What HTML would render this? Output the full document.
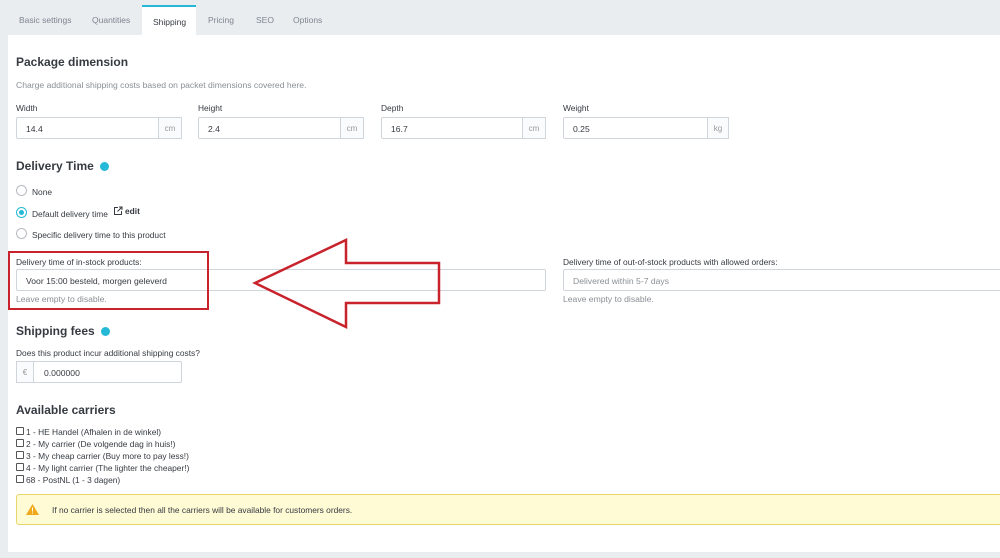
<!DOCTYPE html>
<html><head><style>
*{box-sizing:border-box;margin:0;padding:0}
body{width:1000px;height:558px;background:#eaedf0;font-family:"Liberation Sans",sans-serif;color:#363a41;position:relative;overflow:hidden;font-size:8.5px}
.a{position:absolute;white-space:nowrap}
.tab{position:absolute;top:15px;font-size:8.5px;color:#7d8590}
.panel{position:absolute;left:8px;top:35px;width:992px;height:517px;background:#fff}
h2{position:absolute;font-size:12px;font-weight:bold;color:#363a41;white-space:nowrap}
.lbl{position:absolute;font-size:8.4px;color:#363a41;white-space:nowrap}
.inp{position:absolute;height:22px;border:1px solid #cfd5db;border-radius:2px;background:#fff;font-size:8.6px;padding:6px 0 0 9px;color:#363a41}
.unit{position:absolute;top:-1px;right:-1px;width:24px;height:22px;border:1px solid #cfd5db;background:#fafbfc;color:#999;font-size:8px;text-align:center;padding-top:6px}
.help{position:absolute;font-size:8.6px;color:#8a8f95;white-space:nowrap}
.radio{position:absolute;width:11px;height:11px;border:1px solid #b8bcc2;border-radius:50%}
.dot{display:inline-block;width:9px;height:9px;border-radius:50%;background:#25b9d7;vertical-align:middle;margin-left:6px}
.cb{position:absolute;left:16px;width:8px;height:8px;border:1px solid #555;border-radius:1px}
</style></head><body>
<div class="tab" style="left:19px">Basic settings</div>
<div class="tab" style="left:92px">Quantities</div>
<div class="a" style="left:142px;top:5px;width:54px;height:31px;background:#fff;border-top:2px solid #25b9d7"></div>
<div class="tab" style="left:153px;top:17px;color:#363a41">Shipping</div>
<div class="tab" style="left:208px">Pricing</div>
<div class="tab" style="left:256px">SEO</div>
<div class="tab" style="left:293px">Options</div>
<div class="panel"></div>
<h2 style="left:16px;top:55px">Package dimension</h2>
<div class="help" style="left:16px;top:80px">Charge additional shipping costs based on packet dimensions covered here.</div>
<div class="lbl" style="left:16px;top:103px">Width</div>
<div class="inp" style="left:16px;top:117px;width:166px">14.4<div class="unit">cm</div></div>
<div class="lbl" style="left:198px;top:103px">Height</div>
<div class="inp" style="left:198px;top:117px;width:166px">2.4<div class="unit">cm</div></div>
<div class="lbl" style="left:381px;top:103px">Depth</div>
<div class="inp" style="left:381px;top:117px;width:165px">16.7<div class="unit">cm</div></div>
<div class="lbl" style="left:563px;top:103px">Weight</div>
<div class="inp" style="left:563px;top:117px;width:166px">0.25<div class="unit" style="width:22px">kg</div></div>
<h2 style="left:16px;top:159px">Delivery Time<span class="dot"></span></h2>
<div class="radio" style="left:16px;top:185px"></div><div class="lbl" style="left:32px;top:187px">None</div>
<div class="radio" style="left:16px;top:207px;border-color:#25b9d7"><div style="width:5px;height:5px;margin:2px;border-radius:50%;background:#25b9d7"></div></div>
<div class="lbl" style="left:32px;top:209px">Default delivery time</div>
<svg class="a" style="left:113px;top:206px" width="10" height="10" viewBox="0 0 10 10" fill="none" stroke="#363a41" stroke-width="1"><path d="M5 1.5H1.5v7h7V5M6 1h3v3M9 1L4.5 5.5"/></svg>
<div class="lbl" style="left:125px;top:206px;font-weight:bold">edit</div>
<div class="radio" style="left:16px;top:228px"></div><div class="lbl" style="left:32px;top:230px">Specific delivery time to this product</div>
<div class="lbl" style="left:16px;top:257px">Delivery time of in-stock products:</div>
<div class="inp" style="left:16px;top:269px;width:530px">Voor 15:00 besteld, morgen geleverd</div>
<div class="help" style="left:16px;top:294px">Leave empty to disable.</div>
<div class="lbl" style="left:563px;top:257px">Delivery time of out-of-stock products with allowed orders:</div>
<div class="inp" style="left:563px;top:269px;width:445px;color:#8a8f95">Delivered within 5-7 days</div>
<div class="help" style="left:563px;top:294px">Leave empty to disable.</div>
<div class="a" style="left:8px;top:251px;width:201px;height:59px;border:2.5px solid #c8232c"></div>
<svg class="a" style="left:0;top:0" width="1000" height="558"><polygon points="255,283 346,240 346,263 439,263 439,303 346,303 346,327" fill="none" stroke="#c8232c" stroke-width="2.5"/></svg>
<h2 style="left:16px;top:324px">Shipping fees<span class="dot"></span></h2>
<div class="lbl" style="left:16px;top:348px">Does this product incur additional shipping costs?</div>
<div class="inp" style="left:16px;top:361px;width:166px;padding-left:27px">0.000000<div style="position:absolute;left:-1px;top:-1px;width:18px;height:22px;border:1px solid #cfd5db;background:#fafbfc;color:#999;text-align:center;padding-top:6px;font-size:8px">€</div></div>
<h2 style="left:16px;top:403px">Available carriers</h2>
<div class="cb" style="top:427px"></div><div class="lbl" style="left:26px;top:427px">1 - HE Handel (Afhalen in de winkel)</div>
<div class="cb" style="top:439px"></div><div class="lbl" style="left:26px;top:439px">2 - My carrier (De volgende dag in huis!)</div>
<div class="cb" style="top:451px"></div><div class="lbl" style="left:26px;top:451px">3 - My cheap carrier (Buy more to pay less!)</div>
<div class="cb" style="top:463px"></div><div class="lbl" style="left:26px;top:463px">4 - My light carrier (The lighter the cheaper!)</div>
<div class="cb" style="top:475px"></div><div class="lbl" style="left:26px;top:475px">68 - PostNL (1 - 3 dagen)</div>
<div class="a" style="left:16px;top:494px;width:994px;height:31px;background:#fffbd5;border:1px solid #e8d56b;border-radius:3px"></div>
<svg class="a" style="left:26px;top:504px" width="13" height="11" viewBox="0 0 13 11"><polygon points="6.5,0 13,11 0,11" fill="#f0a81c"/><rect x="6" y="3.5" width="1" height="4" fill="#fff"/><rect x="6" y="8.5" width="1" height="1" fill="#fff"/></svg>
<div class="lbl" style="left:52px;top:505px">If no carrier is selected then all the carriers will be available for customers orders.</div>
</body></html>
